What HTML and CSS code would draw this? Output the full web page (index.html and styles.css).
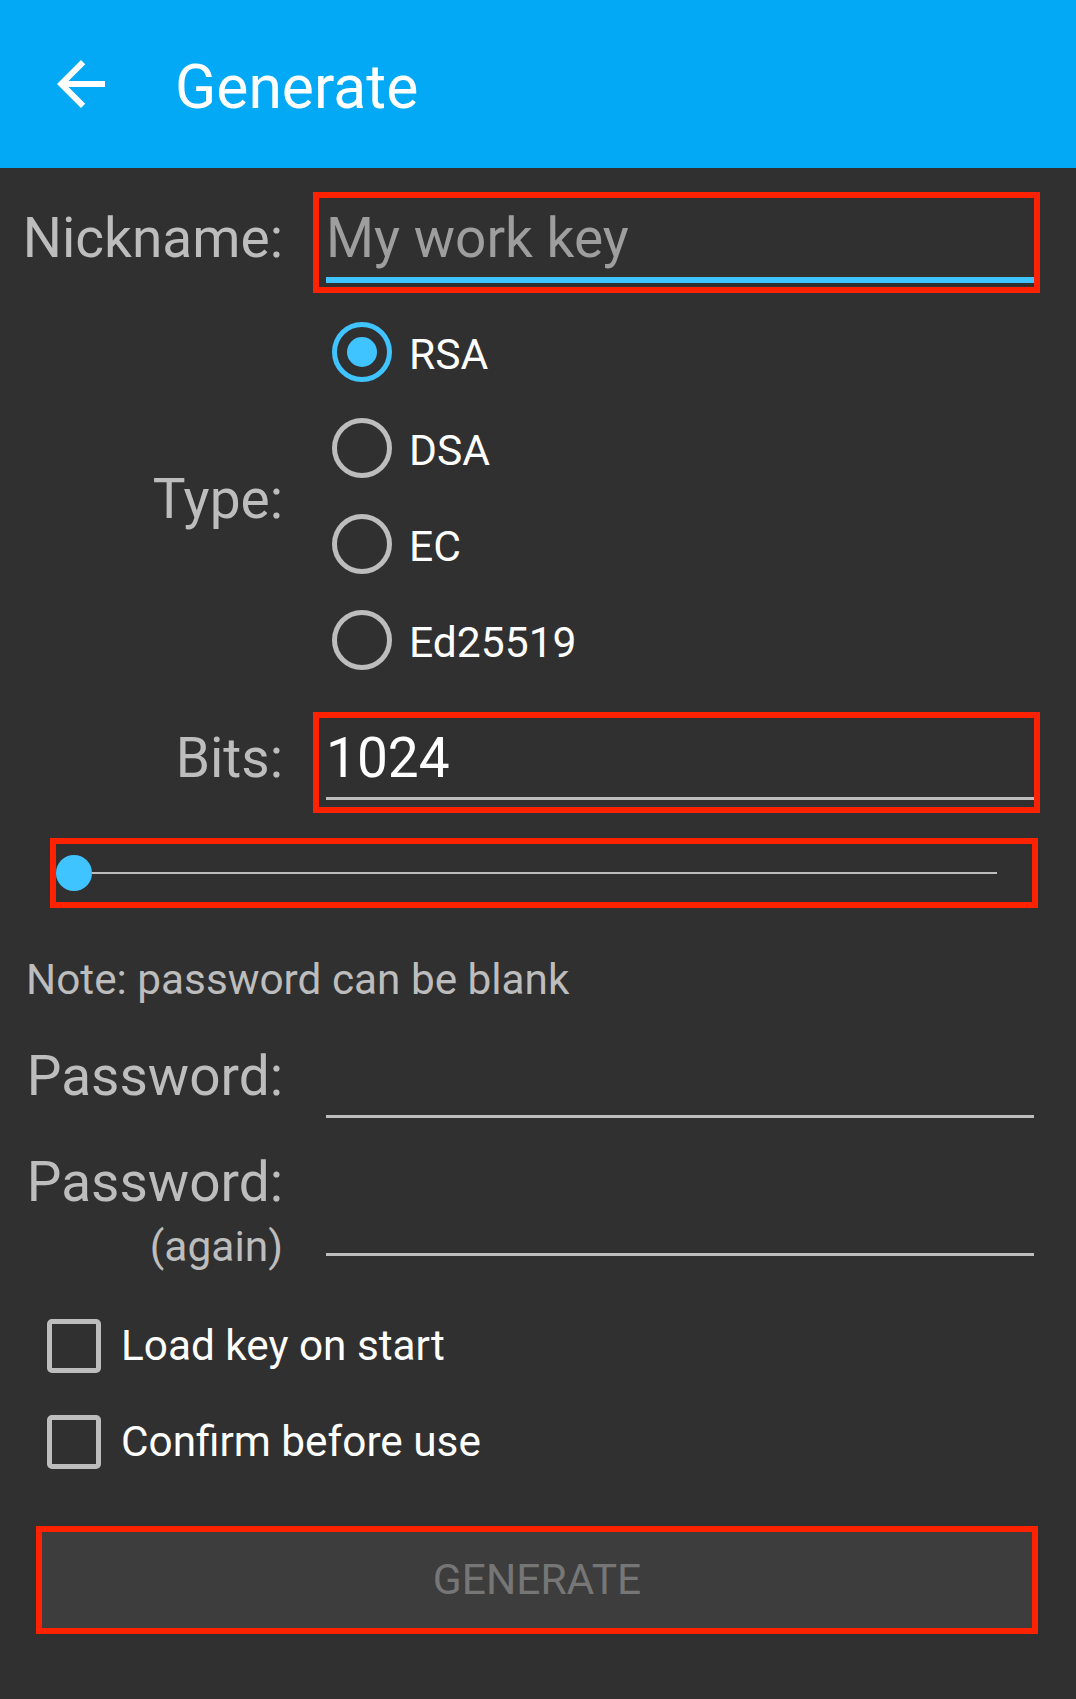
FILE: index.html
```html
<!DOCTYPE html>
<html>
<head>
<meta charset="utf-8">
<title>Generate</title>
<link rel="stylesheet" href="styles.css">
</head>
<body>
<header class="appbar">
  <svg class="back" viewBox="0 0 24 24" width="72" height="72"><path d="M20 11H7.83l5.59-5.59L12 4l-8 8 8 8 1.41-1.41L7.83 13H20v-2z" fill="#fff"/></svg>
  <h1 class="title">Generate</h1>
</header>
<main class="form">
  <div class="row row-nick">
    <label class="label">Nickname:</label>
    <div class="box field-box">
      <div class="input input-focus placeholder">My work key</div>
    </div>
  </div>

  <div class="row row-type">
    <label class="label label-type">Type:</label>
    <div class="radios">
      <div class="radio-row"><span class="radio radio-on"><span class="dot"></span></span><span class="radio-text">RSA</span></div>
      <div class="radio-row"><span class="radio"></span><span class="radio-text">DSA</span></div>
      <div class="radio-row"><span class="radio"></span><span class="radio-text">EC</span></div>
      <div class="radio-row"><span class="radio"></span><span class="radio-text">Ed25519</span></div>
    </div>
  </div>

  <div class="row row-bits">
    <label class="label">Bits:</label>
    <div class="box field-box">
      <div class="input value">1024</div>
    </div>
  </div>

  <div class="box slider-box">
    <span class="thumb"></span>
    <span class="track"></span>
  </div>

  <p class="note">Note: password can be blank</p>

  <div class="row row-pass">
    <label class="label">Password:</label>
    <div class="plain-field">
      <div class="input">&nbsp;</div>
    </div>
  </div>

  <div class="row row-pass2">
    <label class="label label-two"><span class="l1">Password:</span><span class="l2">(again)</span></label>
    <div class="plain-field plain-field-2">
      <div class="input">&nbsp;</div>
    </div>
  </div>

  <div class="checks">
    <div class="check-row"><span class="checkbox"></span><span class="check-text">Load key on start</span></div>
    <div class="check-row"><span class="checkbox"></span><span class="check-text">Confirm before use</span></div>
  </div>

  <div class="box button-box">
    <span class="button-text">GENERATE</span>
  </div>
</main>
</body>
</html>
```
FILE: styles.css
```css
* { box-sizing: border-box; }
html, body { margin: 0; padding: 0; }
body {
  background: #303030;
  font-family: Roboto, "Noto Sans", "Liberation Sans", sans-serif;
  width: 1076px;
  min-height: 1699px;
}
.appbar {
  height: 168px;
  background: #03A9F4;
  display: flex;
  align-items: center;
  padding-left: 45px;
}
.back { display: block; flex-shrink: 0; }
.title {
  margin: 0 0 0 58px;
  padding-top: 7px;
  font-size: 60.6px;
  line-height: 70px;
  font-weight: 400;
  color: #fff;
}
.form { display: flex; flex-direction: column; }
.row { display: flex; }
.label {
  width: 283px;
  flex-shrink: 0;
  text-align: right;
  font-size: 55px;
  line-height: 64px;
  color: #bdbdbd;
}
.box { border: 6px solid #ff2200; }
.row-nick, .row-bits { align-items: baseline; }
.row-nick { margin-top: 24px; }
.row-bits { margin-top: 24px; }
.field-box {
  margin-left: 30px;
  width: 727px;
  height: 101px;
  padding-left: 7px;
}
.input {
  font-size: 55px;
  line-height: 64px;
  padding-top: 8px;
  padding-bottom: 7px;
  border-bottom: 3px solid #bdbdbd;
  min-height: 82px;
  color: #fff;
}
.input-focus { border-bottom: 6px solid #40C4FF; }
.placeholder { color: #9e9e9e; }
.row-type { margin-top: 11px; align-items: center; }
.label-type { padding-top: 5px; }
.radios { margin-left: 30px; display: flex; flex-direction: column; }
.radio-row { height: 96px; display: flex; align-items: center; }
.radio {
  width: 60px; height: 60px;
  margin-left: 19px;
  border: 5px solid #bdbdbd;
  border-radius: 50%;
  display: flex; align-items: center; justify-content: center;
  flex-shrink: 0;
}
.radio-on { border-color: #40C4FF; }
.dot { width: 30px; height: 30px; border-radius: 50%; background: #40C4FF; }
.radio-text {
  margin-left: 17px;
  padding-top: 3px;
  font-size: 42.6px;
  line-height: 50px;
  color: #fff;
}
.slider-box {
  margin: 25px 38px 0 50px;
  height: 70px;
  display: flex;
  align-items: center;
}
.thumb {
  width: 36px; height: 36px;
  border-radius: 50%;
  background: #40C4FF;
  flex-shrink: 0;
}
.track {
  flex: 1;
  height: 2px;
  background: #bdbdbd;
  margin-right: 35px;
}
.note {
  margin: 44px 0 0 0;
  padding-left: 26px;
  font-size: 42.3px;
  line-height: 56px;
  color: #bdbdbd;
}
.row-pass { margin-top: 28px; align-items: baseline; }
.plain-field { margin-left: 43px; width: 708px; }
.row-pass2 { margin-top: 32px; align-items: flex-start; }
.label-two { display: flex; flex-direction: column; align-items: flex-end; }
.l1 { display: block; }
.l2 { display: block; font-size: 42.5px; line-height: 66px; }
.plain-field-2 { margin-top: 24px; }
.checks { margin-top: 18px; padding-left: 47px; }
.check-row { height: 96px; display: flex; align-items: center; }
.checkbox {
  width: 54px; height: 54px;
  border: 5px solid #bdbdbd;
  border-radius: 5px;
  flex-shrink: 0;
}
.check-text {
  margin-left: 20px;
  font-size: 42.3px;
  line-height: 50px;
  color: #fff;
}
.button-box {
  margin: 36px 38px 0 36px;
  height: 108px;
  background: #3d3d3d;
  display: flex;
  align-items: center;
  justify-content: center;
}
.button-text {
  font-size: 42.5px;
  line-height: 50px;
  color: #767676;
}
```
